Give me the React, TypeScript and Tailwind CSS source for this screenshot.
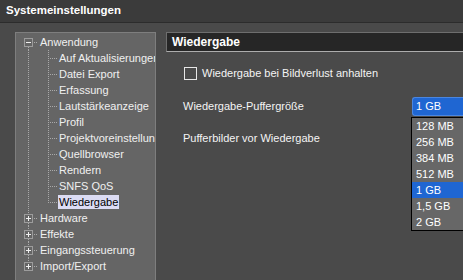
import React from 'react'

const font = { fontFamily: '"Liberation Sans", Arial, sans-serif' }

const children = [
  'Auf Aktualisierungen',
  'Datei Export',
  'Erfassung',
  'Lautstärkeanzeige',
  'Profil',
  'Projektvoreinstellungen',
  'Quellbrowser',
  'Rendern',
  'SNFS QoS',
  'Wiedergabe',
]

const collapsed = ['Hardware', 'Effekte', 'Eingangssteuerung', 'Import/Export']

const sizes = ['128 MB', '256 MB', '384 MB', '512 MB', '1 GB', '1,5 GB', '2 GB']

function Expander({ open, up, down }: { open: boolean; up: boolean; down: boolean }) {
  return (
    <svg width="23" height="16" className="shrink-0">
      {up && <line x1="12.5" y1="0" x2="12.5" y2="4" stroke="#a9a9a9" strokeDasharray="1 1" />}
      {down && <line x1="12.5" y1="13" x2="12.5" y2="16" stroke="#a9a9a9" strokeDasharray="1 1" />}
      <rect x="8.5" y="4.5" width="8" height="8" fill="none" stroke="#9c9c9c" />
      <line x1="10" y1="8.5" x2="15" y2="8.5" stroke="#f0f0f0" />
      {!open && <line x1="12.5" y1="6" x2="12.5" y2="11" stroke="#f0f0f0" />}
      <line x1="18" y1="8.5" x2="22" y2="8.5" stroke="#a9a9a9" strokeDasharray="1 1" />
    </svg>
  )
}

function ChildGutter({ last }: { last: boolean }) {
  return (
    <svg width="42" height="16" className="shrink-0">
      <line x1="12.5" y1="0" x2="12.5" y2="16" stroke="#a9a9a9" strokeDasharray="1 1" />
      <line x1="32.5" y1="0" x2="32.5" y2={last ? 9 : 16} stroke="#a9a9a9" strokeDasharray="1 1" />
      <line x1="34" y1="8.5" x2="41" y2="8.5" stroke="#a9a9a9" strokeDasharray="1 1" />
    </svg>
  )
}

export default function App() {
  return (
    <div className="w-[463px] h-[280px] bg-[#4a4a4a] flex flex-col overflow-hidden text-[11px]" style={font}>
      {/* Title bar */}
      <div className="h-[23px] bg-[#3b3b3b] border-b border-[#2c2c2c] flex items-center px-[6px] shrink-0">
        <span className="font-bold text-[11.5px] text-white">Systemeinstellungen</span>
      </div>

      <div className="flex flex-1 min-h-0">
        {/* Tree */}
        <div className="w-[166px] shrink-0 pl-[15px] pt-[9px] flex">
          <div className="w-[141px] pt-[1px] bg-[#656565] border border-b-0 border-[#7e7e7e] overflow-hidden text-[#f0f0f0] whitespace-nowrap">
            <div className="h-[16px] flex items-center">
              <Expander open up={false} down />
              <span className="pl-[1px]">Anwendung</span>
            </div>
            {children.map((c, i) => (
              <div key={c} className="h-[16px] flex items-center">
                <ChildGutter last={i === children.length - 1} />
                {c === 'Wiedergabe' ? (
                  <span className="bg-[#dcdcf4] text-black px-[1px] h-[14px] leading-[14px]">{c}</span>
                ) : (
                  <span className="pl-[1px]">{c}</span>
                )}
              </div>
            ))}
            {collapsed.map((c, i) => (
              <div key={c} className="h-[16px] flex items-center">
                <Expander open={false} up down={i < collapsed.length - 1} />
                <span className="pl-[1px]">{c}</span>
              </div>
            ))}
          </div>
        </div>

        {/* Settings */}
        <div className="flex-1 pt-[9px] text-[#f4f4f4]">
          <div className="h-[20px] bg-[#262626] border-t border-b border-l border-t-[#6e6e6e] border-b-[#adadad] border-l-[#6e6e6e] flex items-center pl-[5px]">
            <span className="font-bold text-[12px] text-white">Wiedergabe</span>
          </div>

          <div className="mt-[13px] h-[16px] flex items-center pl-[18px]">
            <div className="w-[13px] h-[13px] border border-[#e6e6e6]" />
            <span className="pl-[5px]">Wiedergabe bei Bildverlust anhalten</span>
          </div>

          <div className="mt-[16px] h-[19px] flex items-center">
            <span className="w-[246px] pl-[17px] shrink-0">Wiedergabe-Puffergröße</span>
            <div className="relative flex-1 h-[19px]">
              <div className="h-[19px] bg-[#1f66d2] border border-[#4a86e0] border-r-0 rounded-l-[3px] flex items-center pl-[3px] text-white">
                1 GB
              </div>
              <div className="absolute left-[-1px] top-[20px] w-[90px] bg-[#676767] border border-black">
                {sizes.map((s) => (
                  <div
                    key={s}
                    className={
                      s === '1 GB'
                        ? 'h-[16px] flex items-center pl-[4px] bg-[#1f66d2] text-white'
                        : 'h-[16px] flex items-center pl-[4px] text-white'
                    }
                  >
                    {s}
                  </div>
                ))}
              </div>
            </div>
          </div>

          <div className="mt-[14px] h-[16px] flex items-center pl-[17px]">
            <span>Pufferbilder vor Wiedergabe</span>
          </div>
        </div>
      </div>
    </div>
  )
}
